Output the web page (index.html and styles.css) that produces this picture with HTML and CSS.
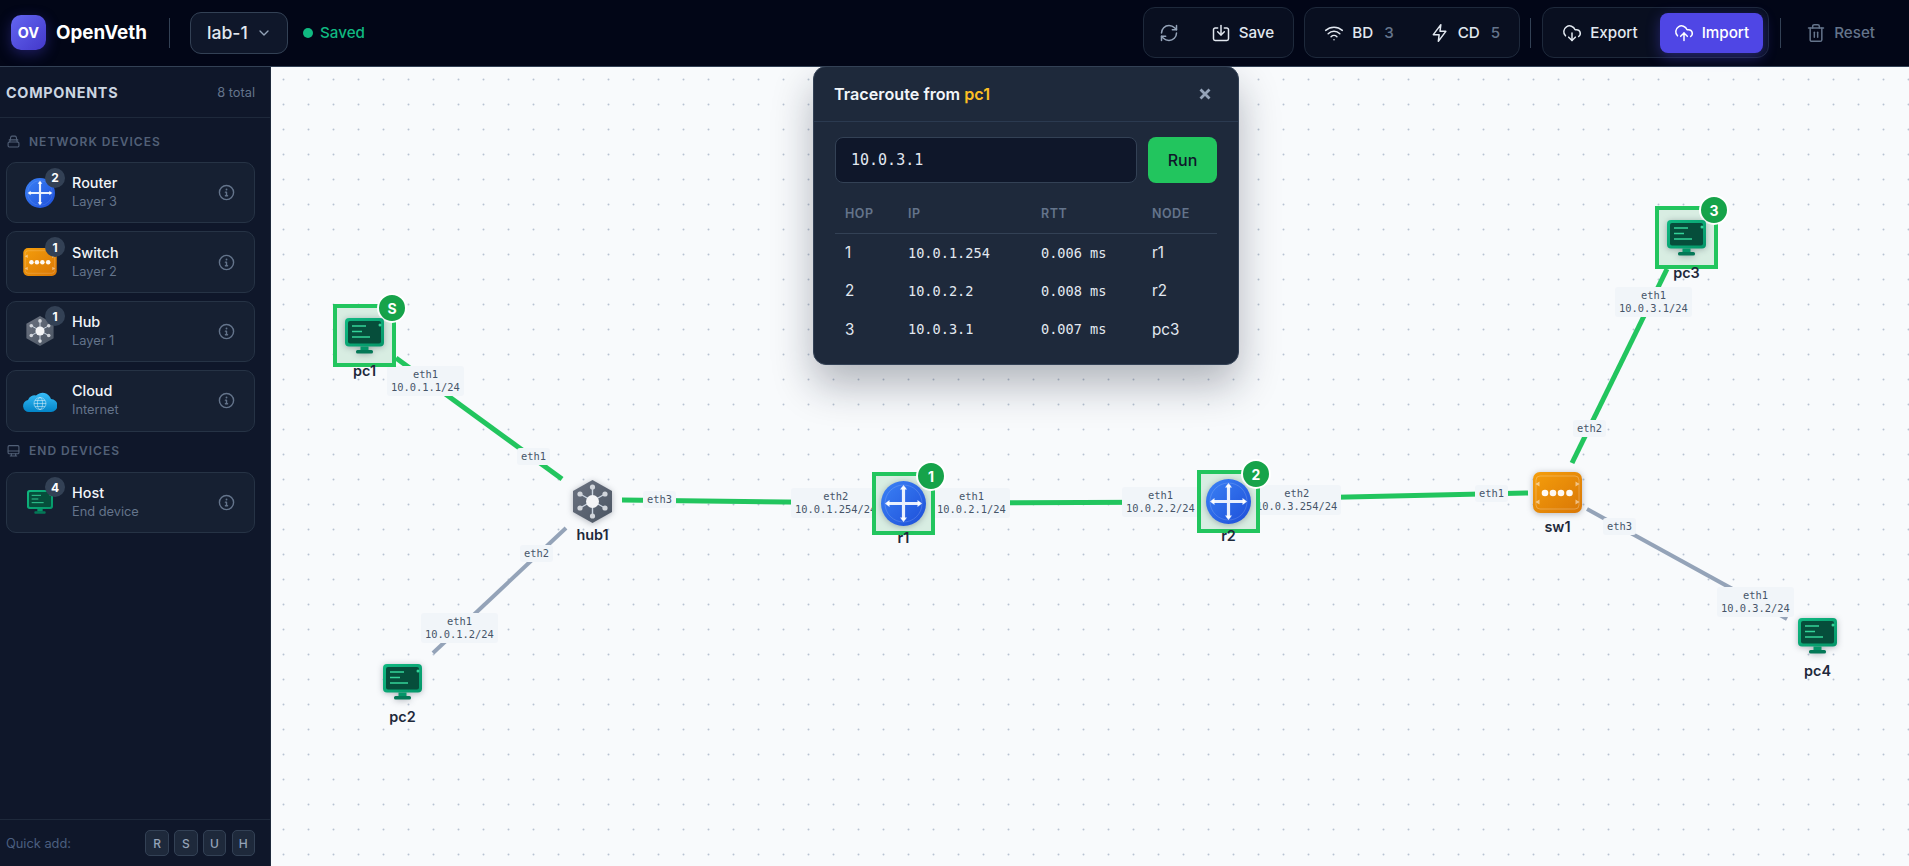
FILE: index.html
```html
<!DOCTYPE html>
<html lang="en">
<head>
<meta charset="utf-8">
<title>OpenVeth</title>
<link rel="stylesheet" href="styles.css">
</head>
<body>
<svg class="defs" width="0" height="0" aria-hidden="true">
  <defs>
    <linearGradient id="gRouter" x1="0" y1="0" x2="1" y2="1"><stop offset="0" stop-color="#3b82f6"/><stop offset="1" stop-color="#1d4ed8"/></linearGradient>
    <linearGradient id="gHub" x1="0" y1="0" x2="1" y2="1"><stop offset="0" stop-color="#6b7280"/><stop offset="1" stop-color="#4b5563"/></linearGradient>
    <linearGradient id="gSwitch" x1="0" y1="0" x2="1" y2="1"><stop offset="0" stop-color="#f59e0b"/><stop offset="1" stop-color="#d97706"/></linearGradient>
    <linearGradient id="gHost" x1="0" y1="0" x2="1" y2="1"><stop offset="0" stop-color="#10b981"/><stop offset="1" stop-color="#059669"/></linearGradient>
    <linearGradient id="gCloud" x1="0" y1="0" x2="0" y2="1"><stop offset="0" stop-color="#38bdf8"/><stop offset="1" stop-color="#0284c7"/></linearGradient>
    <symbol id="router" viewBox="0 0 45 45">
      <circle cx="22.5" cy="22.5" r="22.5" fill="url(#gRouter)"/>
      <circle cx="22.5" cy="22.5" r="18.5" fill="none" stroke="#fff" stroke-opacity=".15"/>
      <path d="M6 22.5h33M22.5 6v33" stroke="#fff" stroke-opacity=".9" stroke-width="3.2" fill="none"/>
      <path d="M22.5 4l3.500 4.500h-7zM22.500 41l3.500-4.500h-7zM4 22.500l4.500-3.500v7zM41 22.500l-4.500-3.500v7z" fill="#fff" fill-opacity=".9"/>
    </symbol>
    <symbol id="hub" viewBox="0 0 43 43">
      <path d="M21.5 0L41 11v21L21.5 43 2 32V11z" fill="url(#gHub)"/>
      <path d="M21.5 7v29M9 14l25 14M34 14L9 28" stroke="#cbd5e1" stroke-width="1.4"/>
      <circle cx="21.5" cy="7" r="2.6" fill="#d1d5db"/><circle cx="34" cy="14" r="2.6" fill="#d1d5db"/><circle cx="34" cy="28" r="2.6" fill="#d1d5db"/>
      <circle cx="21.5" cy="36" r="2.6" fill="#d1d5db"/><circle cx="9" cy="28" r="2.6" fill="#d1d5db"/><circle cx="9" cy="14" r="2.6" fill="#d1d5db"/>
      <circle cx="21.5" cy="21.5" r="6.5" fill="#f3f4f6"/>
    </symbol>
    <symbol id="switch" viewBox="0 0 49 41">
      <rect width="49" height="41" rx="7" fill="url(#gSwitch)"/>
      <rect x="3" y="4" width="43" height="33" rx="4" fill="none" stroke="#fff" stroke-opacity=".25"/>
      <circle cx="12" cy="21" r="3.3" fill="#fff" fill-opacity=".95"/><circle cx="20" cy="21" r="3.3" fill="#fff" fill-opacity=".95"/><circle cx="28" cy="21" r="3.3" fill="#fff" fill-opacity=".95"/><circle cx="36.500" cy="21" r="3.3" fill="#fff" fill-opacity=".95"/>
      <path d="M2.500 12l4-2.500v5zM2.500 30l4-2.500v5zM46.500 12l-4-2.500v5zM46.500 30l-4-2.500v5z" fill="#fff" fill-opacity=".5"/>
    </symbol>
    <symbol id="host" viewBox="0 0 39 36">
      <rect width="39" height="28.500" rx="4" fill="url(#gHost)"/>
      <rect x="3" y="3" width="33" height="22.500" rx="2" fill="#064e3b"/>
      <path d="M7 8h14M7 13.500h10M7 19h18" stroke="#34d399" stroke-width="1.400"/>
      <circle cx="35" cy="7" r="1.500" fill="#34d399"/>
      <rect x="15.500" y="28.500" width="8" height="4" fill="#059669"/>
      <rect x="11" y="32" width="17" height="3.500" rx="1.500" fill="#047857"/>
    </symbol>
    <symbol id="cloud" viewBox="0 0 34 22">
      <path d="M6 22a6 6 0 0 1-1-11.900A7 7 0 0 1 13 5.500 9 9 0 0 1 28 9a6.500 6.500 0 0 1 0 13z" fill="url(#gCloud)"/>
      <g fill="none" stroke="#fff" stroke-opacity=".55" stroke-width=".8"><circle cx="17" cy="13.500" r="6"/><ellipse cx="17" cy="13.500" rx="2.600" ry="6"/><path d="M11 13.500h12M12 10.500h10M12 16.500h10"/></g>
    </symbol>
    <symbol id="info" viewBox="0 0 24 24">
      <circle cx="12" cy="12" r="10" fill="none" stroke="currentColor" stroke-width="2"/>
      <path d="M12 16.500v-5M10.500 11.500H12M10.500 16.500h3" fill="none" stroke="currentColor" stroke-width="2" stroke-linecap="round"/>
      <circle cx="12" cy="7.800" r="1.300" fill="currentColor"/>
    </symbol>
  </defs>
</svg>

<div class="app">
  <header class="topbar">
    <div class="brand">
      <div class="logo">OV</div>
      <span class="brand-name">OpenVeth</span>
    </div>
    <span class="vsep brand-sep"></span>
    <div class="lab-select">
      <span>lab-1</span>
      <svg class="chev" viewBox="0 0 24 24"><path d="M6 9l6 6 6-6"/></svg>
    </div>
    <div class="saved"><span class="saved-dot"></span>Saved</div>

    <div class="actions">
      <div class="group group-tight">
        <button class="btn btn-square"><svg class="ico" viewBox="0 0 24 24"><path d="M3 12a9 9 0 0 1 9-9 9.750 9.750 0 0 1 6.740 2.740L21 8"/><path d="M21 3v5h-5"/><path d="M21 12a9 9 0 0 1-9 9 9.750 9.750 0 0 1-6.740-2.740L3 16"/><path d="M8 16H3v5"/></svg></button>
        <button class="btn"><svg class="ico" viewBox="0 0 24 24"><path d="M8 6H5a2 2 0 0 0-2 2v11a2 2 0 0 0 2 2h14a2 2 0 0 0 2-2V8a2 2 0 0 0-2-2h-3"/><path d="M12 3v11"/><path d="M8 10.500l4 4 4-4"/></svg>Save</button>
      </div>
      <div class="group group-tight">
        <button class="btn"><svg class="ico" viewBox="0 0 24 24"><path d="M12 20h.01"/><path d="M2 8.820a15 15 0 0 1 20 0"/><path d="M5 12.859a10 10 0 0 1 14 0"/><path d="M8.500 16.429a5 5 0 0 1 7 0"/></svg>BD<span class="count">3</span></button>
        <button class="btn"><svg class="ico" viewBox="0 0 24 24"><path d="M13 2L4 14h7l-1 8 9-12h-7z"/></svg>CD<span class="count">5</span></button>
      </div>
      <span class="vsep"></span>
      <div class="group">
        <button class="btn"><svg class="ico" viewBox="0 0 24 24"><path d="M4.200 15.400A7 7 0 1 1 15.700 8h1.800a4.500 4.500 0 0 1 2.500 8.200"/><path d="M12 12v9"/><path d="M8 17l4 4 4-4"/></svg>Export</button>
        <button class="btn btn-primary"><svg class="ico" viewBox="0 0 24 24"><path d="M4.200 15.400A7 7 0 1 1 15.700 8h1.800a4.500 4.500 0 0 1 2.500 8.200"/><path d="M12 12v9"/><path d="M16 16l-4-4-4 4"/></svg>Import</button>
      </div>
      <span class="vsep"></span>
      <button class="btn btn-muted"><svg class="ico" viewBox="0 0 24 24"><path d="M3 6h18"/><path d="M19 6v14a2 2 0 0 1-2 2H7a2 2 0 0 1-2-2V6"/><path d="M8 6V4a2 2 0 0 1 2-2h4a2 2 0 0 1 2 2v2"/><path d="M10 11v6"/><path d="M14 11v6"/></svg>Reset</button>
    </div>
  </header>

  <div class="workspace">
    <aside class="sidebar">
      <div class="side-head">
        <span class="side-title">COMPONENTS</span>
        <span class="side-total">8 total</span>
      </div>
      <div class="side-body">
        <div class="section-label">
          <svg class="sec-ico" viewBox="0 0 24 24"><rect x="2" y="13" width="20" height="9" rx="2"/><path d="M5 13l2-9a2 2 0 0 1 2-2h6a2 2 0 0 1 2 2l2 9"/><path d="M4 9h16"/></svg>
          NETWORK DEVICES
        </div>
        <div class="card">
          <div class="card-icon"><svg class="i-router"><use href="#router"/></svg><span class="count-badge">2</span></div>
          <div class="card-text"><div class="card-name">Router</div><div class="card-sub">Layer 3</div></div>
          <svg class="info"><use href="#info"/></svg>
        </div>
        <div class="card">
          <div class="card-icon"><svg class="i-switch"><use href="#switch"/></svg><span class="count-badge">1</span></div>
          <div class="card-text"><div class="card-name">Switch</div><div class="card-sub">Layer 2</div></div>
          <svg class="info"><use href="#info"/></svg>
        </div>
        <div class="card">
          <div class="card-icon"><svg class="i-hub"><use href="#hub"/></svg><span class="count-badge">1</span></div>
          <div class="card-text"><div class="card-name">Hub</div><div class="card-sub">Layer 1</div></div>
          <svg class="info"><use href="#info"/></svg>
        </div>
        <div class="card">
          <div class="card-icon"><svg class="i-cloud"><use href="#cloud"/></svg></div>
          <div class="card-text"><div class="card-name">Cloud</div><div class="card-sub">Internet</div></div>
          <svg class="info"><use href="#info"/></svg>
        </div>
        <div class="section-label section-end">
          <svg class="sec-ico" viewBox="0 0 24 24"><rect x="2" y="3" width="20" height="15" rx="2"/><path d="M2 13h20"/><path d="M8 22v-4M16 22v-4M6 22h12"/></svg>
          END DEVICES
        </div>
        <div class="card">
          <div class="card-icon"><svg class="i-host"><use href="#host"/></svg><span class="count-badge">4</span></div>
          <div class="card-text"><div class="card-name">Host</div><div class="card-sub">End device</div></div>
          <svg class="info"><use href="#info"/></svg>
        </div>
      </div>
      <div class="side-foot">
        <span class="quick-label">Quick add:</span>
        <div class="quick-keys"><span class="key">R</span><span class="key">S</span><span class="key">U</span><span class="key">H</span></div>
      </div>
    </aside>

    <main class="canvas">
      <svg class="graph" viewBox="271 67 1638 799" width="1638" height="799">
        <defs><pattern id="dots" x="271" y="67" width="25" height="25" patternUnits="userSpaceOnUse"><circle cx="12.500" cy="12.500" r="1" fill="#b8c3d3"/></pattern></defs>
        <rect x="271" y="67" width="1638" height="799" fill="url(#dots)"/>
        <g class="link-on">
          <path d="M396 358L562 479"/>
          <path d="M622 500L880 503"/>
          <path d="M930 503L1210 502"/>
          <path d="M1255 499L1528 493"/>
          <path d="M1572 463L1667 269"/>
        </g>
        <g class="link-off">
          <path d="M566 528L433 653"/>
          <path d="M1587 509L1787 619"/>
        </g>
      </svg>

      <div class="edge e-a">eth1<br>10.0.1.1/24</div>
      <div class="edge e-b">eth1</div>
      <div class="edge e-c">eth3</div>
      <div class="edge e-d">eth2<br>10.0.1.254/24</div>
      <div class="edge e-e">eth1<br>10.0.2.1/24</div>
      <div class="edge e-f">eth1<br>10.0.2.2/24</div>
      <div class="edge e-g">eth2<br>10.0.3.254/24</div>
      <div class="edge e-h">eth1</div>
      <div class="edge e-i">eth2</div>
      <div class="edge e-j">eth1<br>10.0.3.1/24</div>
      <div class="edge e-k">eth3</div>
      <div class="edge e-l">eth1<br>10.0.3.2/24</div>
      <div class="edge e-m">eth2</div>
      <div class="edge e-n">eth1<br>10.0.1.2/24</div>

      <div class="node n-pc n-pc1"><div class="hop hop-pc"><span class="hop-badge">S</span></div><svg class="node-ico"><use href="#host"/></svg><span class="node-label">pc1</span></div>
      <div class="node n-pc n-pc2"><svg class="node-ico"><use href="#host"/></svg><span class="node-label">pc2</span></div>
      <div class="node n-pc n-pc3"><div class="hop hop-pc"><span class="hop-badge">3</span></div><svg class="node-ico"><use href="#host"/></svg><span class="node-label">pc3</span></div>
      <div class="node n-pc n-pc4"><svg class="node-ico"><use href="#host"/></svg><span class="node-label">pc4</span></div>
      <div class="node n-hub"><svg class="node-ico"><use href="#hub"/></svg><span class="node-label">hub1</span></div>
      <div class="node n-rt n-r1"><div class="hop hop-rt"><span class="hop-badge">1</span></div><svg class="node-ico"><use href="#router"/></svg><span class="node-label">r1</span></div>
      <div class="node n-rt n-r2"><div class="hop hop-rt"><span class="hop-badge">2</span></div><svg class="node-ico"><use href="#router"/></svg><span class="node-label">r2</span></div>
      <div class="node n-sw"><svg class="node-ico"><use href="#switch"/></svg><span class="node-label">sw1</span></div>

      <section class="modal">
        <div class="modal-head">
          <h2 class="modal-title">Traceroute from <span class="modal-src">pc1</span></h2>
          <svg class="modal-close" viewBox="0 0 12 12"><path d="M1.500 1.500l9 9M10.500 1.500l-9 9"/></svg>
        </div>
        <div class="modal-body">
          <div class="trace-form">
            <div class="trace-input">10.0.3.1</div>
            <button class="trace-run">Run</button>
          </div>
          <table class="trace">
            <thead><tr><th class="c-hop">HOP</th><th class="c-ip">IP</th><th class="c-rtt">RTT</th><th>NODE</th></tr></thead>
            <tbody>
              <tr><td>1</td><td class="mono">10.0.1.254</td><td class="mono">0.006 ms</td><td>r1</td></tr>
              <tr><td>2</td><td class="mono">10.0.2.2</td><td class="mono">0.008 ms</td><td>r2</td></tr>
              <tr><td>3</td><td class="mono">10.0.3.1</td><td class="mono">0.007 ms</td><td>pc3</td></tr>
            </tbody>
          </table>
        </div>
      </section>
    </main>
  </div>
</div>
</body>
</html>
```
FILE: styles.css
```css
* { box-sizing: border-box; }
html, body { margin: 0; height: 100%; overflow: hidden; }
body { font-family: Inter, "Noto Sans", sans-serif; background: #f8fafc; color: #e2e8f0; }
.defs { position: absolute; }
.app { display: flex; flex-direction: column; height: 100vh; }

/* top bar */
.topbar { flex: none; height: 67px; display: flex; align-items: center; padding: 0 20px 1px 11px; background: #020617; border-bottom: 1px solid #334155; position: relative; z-index: 5; }
.brand { display: flex; align-items: center; gap: 10px; width: 138px; flex: none; }
.logo { width: 35px; height: 35px; border-radius: 10px; display: flex; align-items: center; justify-content: center; background: linear-gradient(135deg, #6366f1, #4338ca); color: #fff; font-weight: 700; font-size: 14.400px; box-shadow: 0 4px 14px rgba(79, 70, 229, .35); flex: none; }
.brand-name { font-size: 18.800px; font-weight: 700; color: #fff; }
.vsep { width: 1px; height: 30px; background: #334155; flex: none; }
.brand-sep { margin: 0 20px; }
.lab-select { width: 98px; height: 42px; border-radius: 11px; border: 1px solid #334155; background: #0f172a; display: flex; align-items: center; justify-content: space-between; padding: 0 15px 0 16px; font-size: 17.600px; font-weight: 500; color: #e2e8f0; }
.chev { width: 16px; height: 16px; fill: none; stroke: #94a3b8; stroke-width: 2; stroke-linecap: round; stroke-linejoin: round; }
.saved { margin-left: 15px; display: flex; align-items: center; gap: 7px; font-size: 15.200px; font-weight: 500; color: #10b981; }
.saved-dot { width: 10px; height: 10px; border-radius: 50%; background: #10b981; }

.actions { margin-left: auto; display: flex; align-items: center; gap: 11px; }
.group { height: 51px; display: flex; align-items: center; gap: 8px; padding: 0 5px; border: 1px solid #1e293b; border-radius: 12px; background: rgba(15, 23, 42, .5); }
.group-tight { margin-right: -1px; }
.btn { height: 40px; display: flex; align-items: center; gap: 8px; padding: 0 14px; border: 0; border-radius: 8px; background: none; font: 500 15.200px Inter, sans-serif; color: #e2e8f0; }
.btn-square { width: 40px; padding: 0; justify-content: center; color: #94a3b8; }
.btn-primary { background: #4f46e5; color: #fff; box-shadow: 0 4px 14px rgba(79, 70, 229, .4); }
.btn-muted { color: #64748b; }
.ico { width: 20px; height: 20px; flex: none; fill: none; stroke: currentColor; stroke-width: 1.8; stroke-linecap: round; stroke-linejoin: round; }
.count { margin-left: 3px; color: #64748b; }

/* layout */
.workspace { flex: 1; display: flex; min-height: 0; }
.sidebar { flex: none; width: 271px; display: flex; flex-direction: column; background: #0f172a; border-right: 1px solid #1e293b; }
.side-head { flex: none; height: 51px; display: flex; align-items: center; justify-content: space-between; padding: 0 15px 0 6px; border-bottom: 1px solid #1e293b; }
.side-title { font-size: 14.400px; font-weight: 700; letter-spacing: .7px; color: #cbd5e1; }
.side-total { font-size: 12.800px; color: #64748b; }
.side-body { flex: 1; padding: 13px 15px 0 6px; display: flex; flex-direction: column; gap: 8px; }
.section-label { height: 20px; flex: none; display: flex; align-items: center; gap: 9px; font-size: 12px; font-weight: 600; letter-spacing: 1px; color: #526077; padding-left: 1px; margin-bottom: 3px; }
.section-end { margin-top: 1px; }
.sec-ico { width: 13px; height: 13px; fill: none; stroke: #526077; stroke-width: 2; stroke-linecap: round; stroke-linejoin: round; flex: none; }
.card { height: 61.400px; flex: none; display: flex; align-items: center; padding: 0 19px 0 16px; border: 1px solid #263345; border-radius: 10px; background: #162032; }
.card-icon { position: relative; width: 34px; height: 34px; display: flex; align-items: center; justify-content: center; margin-right: 15px; flex: none; }
.i-router { width: 30px; height: 30px; }
.i-switch { width: 34px; height: 28px; }
.i-hub { width: 30px; height: 30px; }
.i-cloud { width: 34px; height: 22px; }
.i-host { width: 26px; height: 24px; }
.count-badge { position: absolute; top: -8px; right: -8px; width: 20px; height: 20px; border-radius: 50%; background: #334155; color: #fff; font-size: 12px; font-weight: 700; display: flex; align-items: center; justify-content: center; }
.card-text { flex: 1; min-width: 0; }
.card-name { font-size: 14.400px; font-weight: 500; color: #f1f5f9; line-height: 19px; }
.card-sub { font-size: 12.800px; color: #64748b; line-height: 20px; }
.info { width: 17px; height: 17px; color: #64748b; flex: none; }
.side-foot { flex: none; height: 47px; display: flex; align-items: center; justify-content: space-between; padding: 0 15px 0 6px; border-top: 1px solid #1e293b; }
.quick-label { font-size: 12.800px; color: #4b5f80; }
.quick-keys { display: flex; gap: 5.200px; }
.key { width: 23.500px; height: 26px; border: 1px solid #334155; border-radius: 5px; background: #1e293b; color: #94a3b8; font-size: 12px; font-weight: 500; display: flex; align-items: center; justify-content: center; }

/* canvas */
.canvas { flex: 1; position: relative; overflow: hidden; background: #f8fafc; }
.graph { position: absolute; left: 0; top: 0; display: block; }
.link-on path { stroke: #22c55e; stroke-width: 5; fill: none; }
.link-off path { stroke: #94a3b8; stroke-width: 4; fill: none; }

.edge { position: absolute; z-index: 1; padding: 2px 4px; border-radius: 3px; background: #f1f5f9; color: #475569; font: 10.400px/13px "DejaVu Sans Mono", monospace; text-align: center; white-space: nowrap; }
.e-a { left: 116px; top: 299px; }
.e-b { left: 246px; top: 381px; }
.e-c { left: 372px; top: 424px; }
.e-d { left: 520px; top: 421px; }
.e-e { left: 662px; top: 421px; }
.e-f { left: 851px; top: 420px; }
.e-g { left: 981px; top: 418px; }
.e-h { left: 1204px; top: 418px; }
.e-i { left: 1302px; top: 353px; }
.e-j { left: 1344px; top: 220px; }
.e-k { left: 1332px; top: 451px; }
.e-l { left: 1446px; top: 520px; }
.e-m { left: 249px; top: 478px; }
.e-n { left: 150px; top: 546px; }

.node { position: absolute; z-index: 2; display: flex; flex-direction: column; align-items: center; }
.node-ico { position: relative; display: block; flex: none; width: 100%; filter: drop-shadow(0 1px 3px rgba(15, 23, 42, .3)); }
.node-label { position: relative; font-size: 14.400px; font-weight: 600; line-height: 16px; color: #1e293b; white-space: nowrap; }
.n-pc { width: 39px; }
.n-pc .node-ico { height: 36px; }
.n-pc .node-label { margin-top: 9px; }
.n-rt { width: 45px; }
.n-rt .node-ico { height: 45px; }
.n-rt .node-label { margin-top: 4px; }
.n-hub { width: 43px; left: 300px; top: 413px; }
.n-hub .node-ico { height: 43px; }
.n-hub .node-label { margin-top: 4px; }
.n-sw { width: 49px; left: 1262px; top: 405px; }
.n-sw .node-ico { height: 41px; }
.n-sw .node-label { margin-top: 6px; }
.n-pc1 { left: 74px; top: 251px; }
.n-pc2 { left: 112px; top: 597px; }
.n-pc3 { left: 1396px; top: 153px; }
.n-pc4 { left: 1527px; top: 551px; }
.n-r1 { left: 610px; top: 414px; }
.n-r2 { left: 935px; top: 412px; }

.hop { position: absolute; width: 63px; height: 63px; border: 4px solid #22c55e; background: #d8ede2; }
.hop-pc { left: -12px; top: -14px; }
.hop-rt { left: -9px; top: -9px; }
.hop-badge { position: absolute; left: 40px; top: -15px; width: 30px; height: 30px; border: 2px solid #fff; border-radius: 50%; background: #16a34a; color: #fff; font-size: 14px; font-weight: 700; display: flex; align-items: center; justify-content: center; }

/* modal */
.modal { position: absolute; z-index: 4; left: 542px; top: -1px; width: 426px; height: 299px; border: 1px solid #334155; border-radius: 13px; background: #1e293b; box-shadow: 0 20px 40px rgba(15, 23, 42, .3); }
.modal-head { height: 55px; display: flex; align-items: center; justify-content: space-between; padding: 0 27px 0 20px; border-bottom: 1px solid #2b3a50; }
.modal-title { margin: 0; font-size: 16.200px; font-weight: 600; color: #f1f5f9; }
.modal-src { color: #fbbf24; }
.modal-close { width: 12px; height: 12px; fill: none; stroke: #94a3b8; stroke-width: 2.800; }
.modal-body { padding: 15px 21px 0; }
.trace-form { display: flex; gap: 11px; }
.trace-input { flex: 1; height: 46px; display: flex; align-items: center; padding: 0 15px; border: 1px solid #334155; border-radius: 8px; background: #0f172a; font: 15px "DejaVu Sans Mono", monospace; color: #e2e8f0; }
.trace-run { width: 69px; height: 46px; border: 0; border-radius: 8px; background: #22c55e; color: #0f172a; font: 500 16px Inter, sans-serif; }
.trace { width: 382px; margin-top: 12px; border-collapse: collapse; table-layout: fixed; font-size: 15.200px; }
.trace th { height: 38px; padding: 0 0 0 10px; text-align: left; font-size: 12.500px; font-weight: 600; letter-spacing: .5px; color: #64748b; border-bottom: 1px solid #334155; }
.trace td { height: 38.500px; padding: 0 0 0 10px; color: #e2e8f0; }
.c-hop { width: 63px; }
.c-ip { width: 133px; }
.c-rtt { width: 111px; }
.mono { font: 13.600px "DejaVu Sans Mono", monospace; }
```
